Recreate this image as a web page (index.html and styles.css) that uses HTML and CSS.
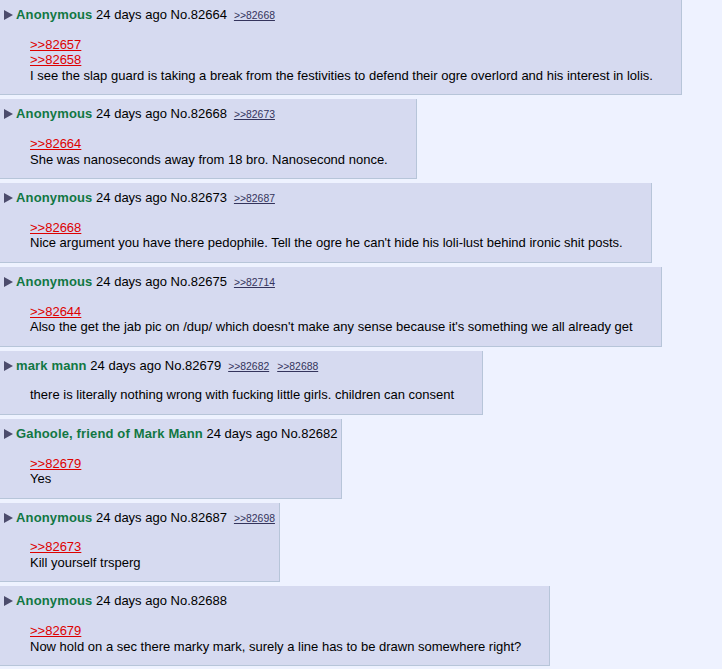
FILE: index.html
```html
<!DOCTYPE html>
<html>
<head>
<meta charset="utf-8">
<link rel="stylesheet" href="styles.css">
</head>
<body>
<div class="thread">
  <div class="post">
    <div class="info"><span class="arrow"></span><span class="name">Anonymous</span> 24 days ago No.82664<a class="backlink" href="#">&gt;&gt;82668</a></div>
    <div class="msg"><a class="quote" href="#">&gt;&gt;82657</a><br><a class="quote" href="#">&gt;&gt;82658</a><br>I see the slap guard is taking a break from the festivities to defend their ogre overlord and his interest in lolis.</div>
  </div>
  <div class="post">
    <div class="info"><span class="arrow"></span><span class="name">Anonymous</span> 24 days ago No.82668<a class="backlink" href="#">&gt;&gt;82673</a></div>
    <div class="msg"><a class="quote" href="#">&gt;&gt;82664</a><br>She was nanoseconds away from 18 bro. Nanosecond nonce.</div>
  </div>
  <div class="post">
    <div class="info"><span class="arrow"></span><span class="name">Anonymous</span> 24 days ago No.82673<a class="backlink" href="#">&gt;&gt;82687</a></div>
    <div class="msg"><a class="quote" href="#">&gt;&gt;82668</a><br>Nice argument you have there pedophile. Tell the ogre he can't hide his loli-lust behind ironic shit posts.</div>
  </div>
  <div class="post">
    <div class="info"><span class="arrow"></span><span class="name">Anonymous</span> 24 days ago No.82675<a class="backlink" href="#">&gt;&gt;82714</a></div>
    <div class="msg"><a class="quote" href="#">&gt;&gt;82644</a><br>Also the get the jab pic on /dup/ which doesn't make any sense because it's something we all already get</div>
  </div>
  <div class="post">
    <div class="info"><span class="arrow"></span><span class="name">mark mann</span> 24 days ago No.82679<a class="backlink" href="#">&gt;&gt;82682</a><a class="backlink" href="#">&gt;&gt;82688</a></div>
    <div class="msg">there is literally nothing wrong with fucking little girls. children can consent</div>
  </div>
  <div class="post">
    <div class="info"><span class="arrow"></span><span class="name">Gahoole, friend of Mark Mann</span> 24 days ago No.82682</div>
    <div class="msg"><a class="quote" href="#">&gt;&gt;82679</a><br>Yes</div>
  </div>
  <div class="post">
    <div class="info"><span class="arrow"></span><span class="name">Anonymous</span> 24 days ago No.82687<a class="backlink" href="#">&gt;&gt;82698</a></div>
    <div class="msg"><a class="quote" href="#">&gt;&gt;82673</a><br>Kill yourself trsperg</div>
  </div>
  <div class="post">
    <div class="info"><span class="arrow"></span><span class="name">Anonymous</span> 24 days ago No.82688</div>
    <div class="msg"><a class="quote" href="#">&gt;&gt;82679</a><br>Now hold on a sec there marky mark, surely a line has to be drawn somewhere right?</div>
  </div>
</div>
</body>
</html>
```
FILE: styles.css
```css
html, body {
  margin: 0;
  padding: 0;
  background: #eef2ff;
}
body {
  font-family: "Liberation Sans", Arial, sans-serif;
  font-size: 13px;
  line-height: 1.2;
  color: #000;
}
.thread {
  display: flex;
  flex-direction: column;
  align-items: flex-start;
  gap: 4px;
}
.post {
  background: #d6daf0;
  border-right: 1px solid #b7c5d9;
  border-bottom: 1px solid #b7c5d9;
  padding: 7px 4px 11px 0;
}
.info {
  padding-left: 4px;
  white-space: nowrap;
}
.arrow {
  display: inline-block;
  width: 0;
  height: 0;
  border-top: 5px solid transparent;
  border-bottom: 5px solid transparent;
  border-left: 9px solid #4c4c6c;
  margin-right: 3px;
  vertical-align: -1px;
}
.name {
  color: #117743;
  font-weight: bold;
  letter-spacing: 0.15px;
}
.backlink {
  color: #34345c;
  font-size: 0.8em;
  margin-left: 7px;
  text-decoration: underline;
}
.backlink + .backlink {
  margin-left: 8px;
}
.msg {
  margin: 14px 24px 0 30px;
  white-space: nowrap;
}
.quote {
  color: #dd0000;
  text-decoration: underline;
}
```
